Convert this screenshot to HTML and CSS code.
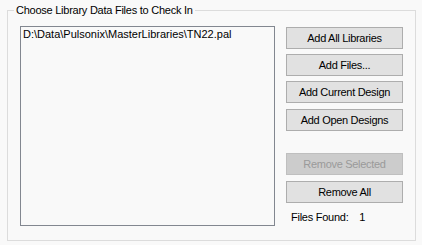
FILE: index.html
```html
<!DOCTYPE html>
<html lang="en">
<head>
    <meta charset="UTF-8">
    <meta name="viewport" content="width=device-width, initial-scale=1.0">
    <title>Check In Library Files</title>
    <link rel="stylesheet" href="styles.css">
</head>
<body>
    <div class="group">
        <span class="group-title">Choose Library Data Files to Check In</span>
        <div class="group-body">
            <div class="file-list">
                <div class="file-item">D:\Data\Pulsonix\MasterLibraries\TN22.pal</div>
            </div>
            <div class="actions">
                <button class="btn btn-first">Add All Libraries</button>
                <button class="btn">Add Files...</button>
                <button class="btn">Add Current Design</button>
                <button class="btn btn-open">Add Open Designs</button>
                <button class="btn btn-remove" disabled>Remove Selected</button>
                <button class="btn">Remove All</button>
                <div class="found">
                    <span class="found-label">Files Found:</span>
                    <span>1</span>
                </div>
            </div>
        </div>
    </div>
</body>
</html>
```

FILE: styles.css
```css
body {
    margin: 0;
    background-color: #f9f9f9;
    font-family: "Liberation Sans", Arial, sans-serif;
    font-size: 11px;
    line-height: 13px;
    letter-spacing: -0.25px;
    color: #000;
}
.group {
    position: relative;
    box-sizing: border-box;
    margin: 10px 0 0 7px;
    width: 409px;
    height: 231px;
    border: 1px solid #dcdcdc;
}
.group-title {
    position: absolute;
    top: -7px;
    left: 6px;
    padding: 0 2px;
    background-color: #f9f9f9;
}
.group-body {
    display: flex;
    padding: 15px 0 0 12px;
}
.file-list {
    box-sizing: border-box;
    width: 255px;
    height: 200px;
    border: 1px solid #828790;
    padding: 1px 2px;
    background-color: #f9f9f9;
}
.file-item {
    letter-spacing: 0;
}
.actions {
    display: flex;
    flex-direction: column;
    margin-left: 11px;
    padding-top: 1px;
}
.btn {
    box-sizing: border-box;
    width: 117px;
    height: 22px;
    margin-top: 5px;
    padding: 0;
    border: 1px solid #adadad;
    background-color: #e1e1e1;
    font-family: inherit;
    font-size: 11px;
    letter-spacing: -0.3px;
    color: #000;
}
.btn-first {
    margin-top: 0;
}
.btn-open {
    margin-top: 6px;
}
.btn-remove {
    margin-top: 22px;
}
.btn:disabled {
    background-color: #cccccc;
    border-color: #bfbfbf;
    color: #9a9a9a;
}
.btn-remove + .btn {
    margin-top: 6px;
}
.found {
    margin-top: 8px;
    padding-left: 5px;
}
.found-label {
    margin-right: 8px;
}
```
